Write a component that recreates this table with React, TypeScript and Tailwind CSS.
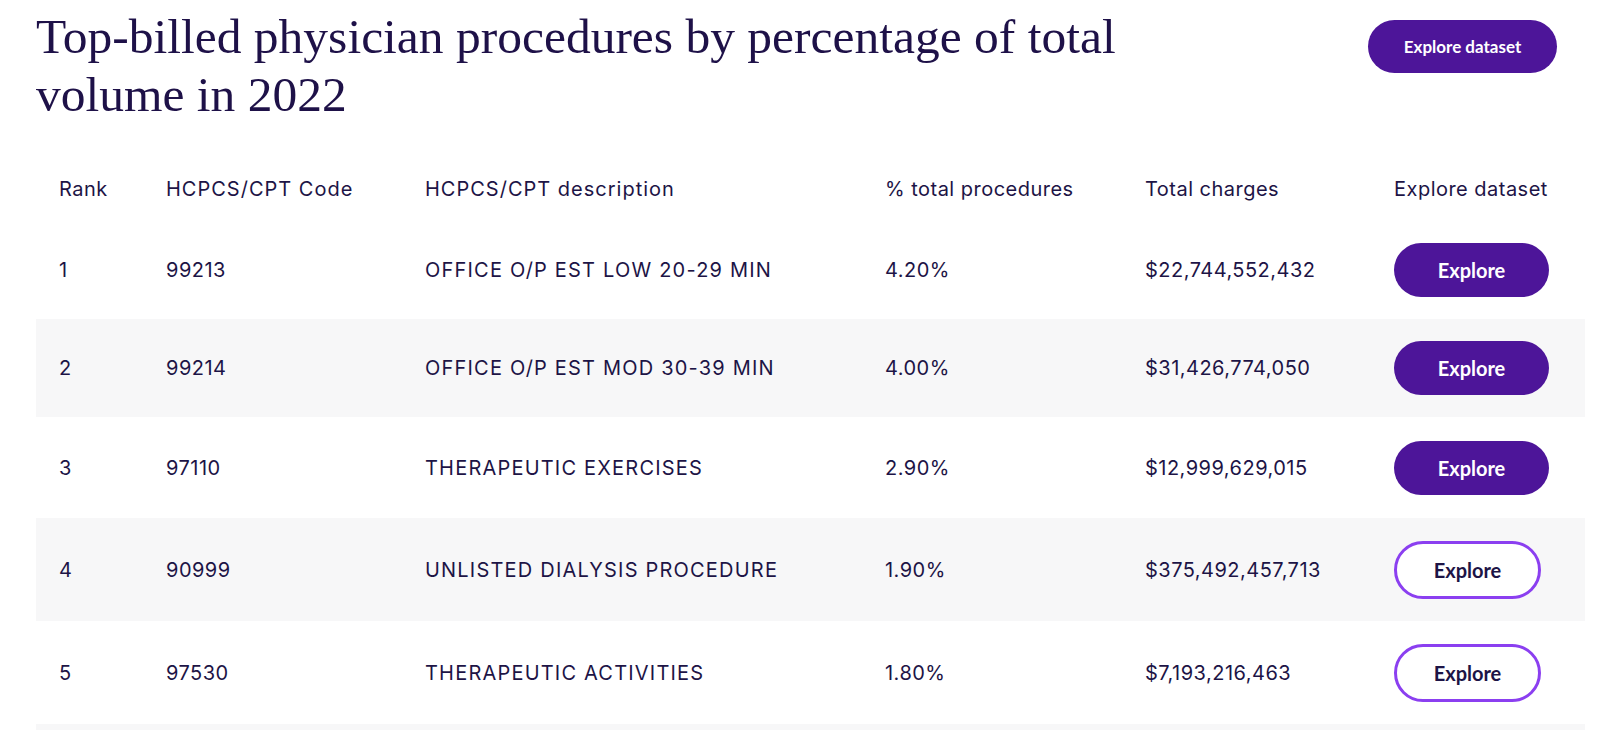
const rows = [
  { rank: 1, code: '99213', desc: 'OFFICE O/P EST LOW 20-29 MIN', pct: '4.20%', charges: '$22,744,552,432', filled: true, h: 'h-[98px]' },
  { rank: 2, code: '99214', desc: 'OFFICE O/P EST MOD 30-39 MIN', pct: '4.00%', charges: '$31,426,774,050', filled: true, h: 'h-[98px]' },
  { rank: 3, code: '97110', desc: 'THERAPEUTIC EXERCISES', pct: '2.90%', charges: '$12,999,629,015', filled: true, h: 'h-[101px]' },
  { rank: 4, code: '90999', desc: 'UNLISTED DIALYSIS PROCEDURE', pct: '1.90%', charges: '$375,492,457,713', filled: false, h: 'h-[103px]' },
  { rank: 5, code: '97530', desc: 'THERAPEUTIC ACTIVITIES', pct: '1.80%', charges: '$7,193,216,463', filled: false, h: 'h-[103px]' },
]

const cols = 'grid grid-cols-[107px_259px_460px_260px_249px_214px] items-center'

export default function App() {
  return (
    <div className="h-[730px] overflow-hidden bg-white pl-[36px] pr-[15px] pt-[8px] text-[#1d1446] font-['Inter',sans-serif] tracking-[0.03em]">
      {/* Header */}
      <div className="flex items-start justify-between">
        <h2 className="max-w-[1150px] font-['Liberation_Serif',serif] text-[49.5px] leading-[58px] font-normal tracking-normal text-[#1e1148]">
          Top-billed physician procedures by percentage of total volume in 2022
        </h2>
        <button className="mt-[12px] mr-[28px] h-[53px] w-[189px] shrink-0 rounded-full bg-[#4d1599] font-['Lato',sans-serif] text-[17px] font-bold tracking-normal text-white">
          Explore dataset
        </button>
      </div>

      {/* Table */}
      <div className="mt-[33px]">
        <div className={`${cols} h-[64px] text-[20px]`}>
          <div className="pl-[23px]">Rank</div>
          <div className="pl-[23px] tracking-[0.05em]">HCPCS/CPT Code</div>
          <div className="pl-[23px] tracking-[0.05em]">HCPCS/CPT description</div>
          <div className="pl-[23px]">% total procedures</div>
          <div className="pl-[23px]">Total charges</div>
          <div className="pl-[23px]">Explore dataset</div>
        </div>

        {rows.map((r, i) => (
          <div
            key={r.rank}
            className={`${cols} ${r.h} text-[20px] ${i % 2 === 1 ? 'bg-[#f7f7f8]' : 'bg-white'}`}
          >
            <div className="pl-[23px]">{r.rank}</div>
            <div className="pl-[23px]">{r.code}</div>
            <div className="pl-[23px] tracking-[0.06em]">{r.desc}</div>
            <div className="pl-[23px]">{r.pct}</div>
            <div className="pl-[23px]">{r.charges}</div>
            <div className="pl-[23px]">
              {r.filled ? (
                <button className="h-[54px] w-[155px] rounded-full bg-[#4d1599] font-['Lato',sans-serif] text-[20px] font-bold tracking-normal text-white">
                  Explore
                </button>
              ) : (
                <button className="h-[58px] w-[147px] rounded-full border-[3px] border-[#8b3ff0] bg-white font-['Lato',sans-serif] text-[20px] font-bold tracking-normal text-[#1d1446]">
                  Explore
                </button>
              )}
            </div>
          </div>
        ))}
        <div className="h-[20px] bg-[#f7f7f8]" />
      </div>
    </div>
  )
}
